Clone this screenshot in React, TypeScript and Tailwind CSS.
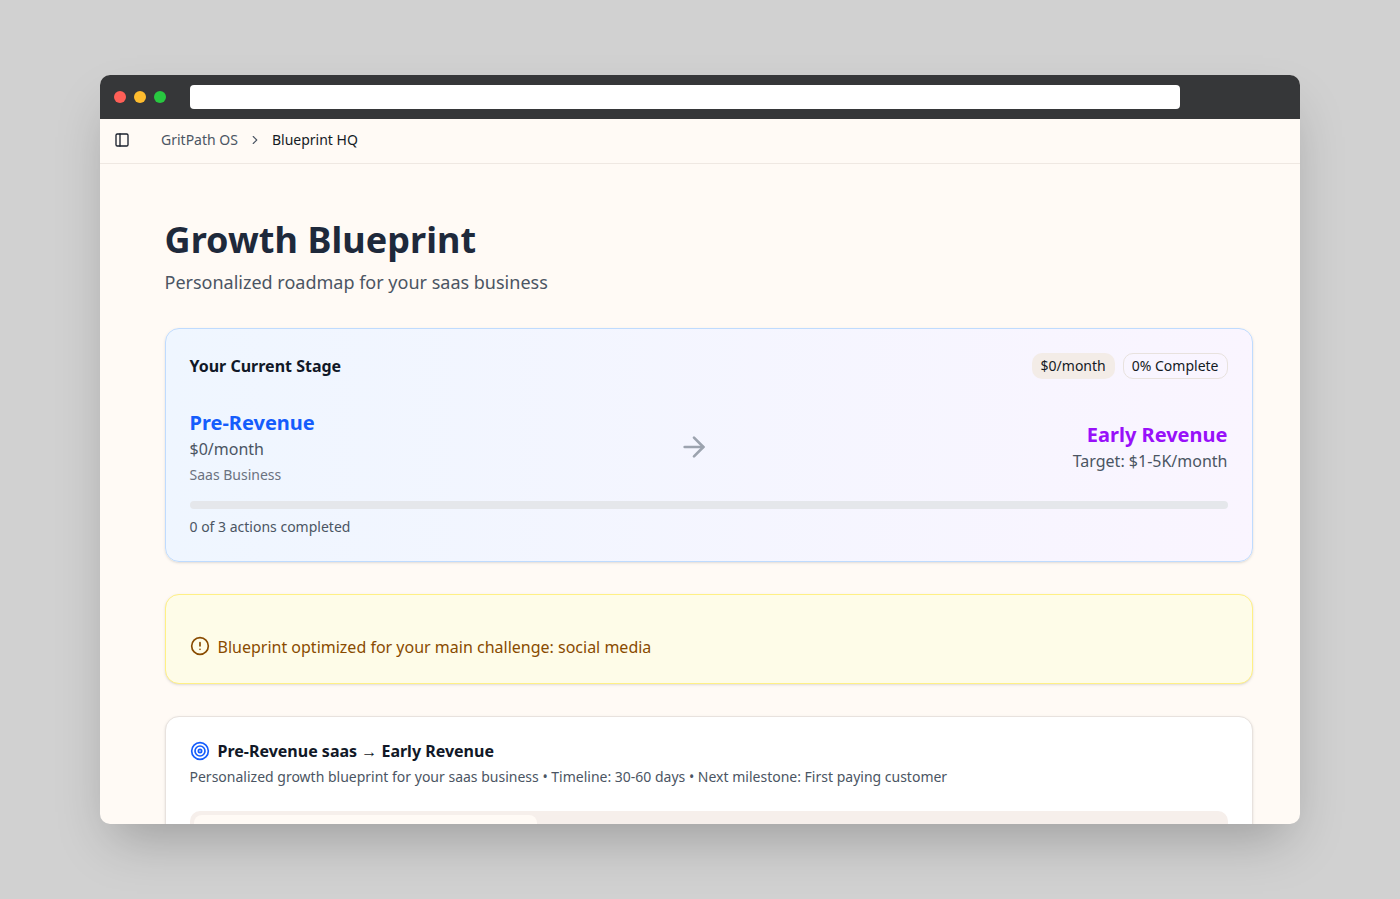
import React from "react";

export default function App() {
  return (
    <div className="w-[1400px] h-[899px] bg-[#d1d1d1] pt-[75px] pl-[100px] overflow-hidden antialiased font-['Noto_Sans',sans-serif]">
      <div className="w-[1200px] h-[749px] rounded-[10px] overflow-hidden bg-[#fffaf5] shadow-2xl flex flex-col">
        <div className="h-[44px] shrink-0 bg-[#363739] flex items-center pl-[14px]">
          <div className="flex gap-2">
            <span className="w-3 h-3 rounded-full bg-[#ff5f57]" />
            <span className="w-3 h-3 rounded-full bg-[#febc2e]" />
            <span className="w-3 h-3 rounded-full bg-[#28c840]" />
          </div>
          <div className="ml-[24px] w-[990px] h-6 rounded bg-white" />
        </div>
        <div className="h-[45px] shrink-0 border-b border-[#efe8e2] flex items-center pl-[14px] pb-[2px] text-sm">
          <svg width="16" height="16" viewBox="0 0 24 24" fill="none" stroke="#1a202c" strokeWidth="2" strokeLinecap="round" strokeLinejoin="round">
            <rect x="3" y="3" width="18" height="18" rx="2" />
            <path d="M9 3v18" />
          </svg>
          <span className="ml-[31px] text-[#4b5563]">GritPath OS</span>
          <svg className="ml-[10px]" width="14" height="14" viewBox="0 0 24 24" fill="none" stroke="#4b5563" strokeWidth="2" strokeLinecap="round" strokeLinejoin="round">
            <path d="m9 18 6-6-6-6" />
          </svg>
          <span className="ml-[10px] text-[#141a24]">Blueprint HQ</span>
        </div>
        <main className="flex-1 overflow-hidden pl-[64.5px] pr-[47.5px] pt-[48px]">
          <h1 className="text-4xl font-bold text-[#1e293b] leading-[56px] tracking-[0.07px]">Growth Blueprint</h1>
          <p className="text-lg text-[#4b5563] leading-7">Personalized roadmap for your saas business</p>

          <section className="mt-[32px] h-[234px] rounded-[14px] border border-[#bfdbfe] bg-gradient-to-r from-[#eff6ff] to-[#faf5ff] shadow-sm px-6 pt-6">
            <div className="flex items-center justify-between h-[26px]">
              <h2 className="font-bold text-base text-[#111827]">Your Current Stage</h2>
              <div className="flex gap-2 text-sm text-[#141a24]">
                <span className="h-[26px] px-[9px] rounded-[10px] bg-[#f3ece7] flex items-center">$0/month</span>
                <span className="h-[26px] px-[8px] rounded-[10px] border border-[#e8e2de] flex items-center">0% Complete</span>
              </div>
            </div>
            <div className="flex items-center justify-between mt-[24px] h-[87px]">
              <div>
                <div className="text-xl font-bold text-[#155dfc] leading-7">Pre-Revenue</div>
                <div className="text-base text-[#4b5563] leading-6">$0/month</div>
                <div className="text-sm text-[#6b7280] mt-1 leading-5">Saas Business</div>
              </div>
              <svg width="32" height="32" viewBox="0 0 24 24" fill="none" stroke="#9ca3af" strokeWidth="2" strokeLinecap="round" strokeLinejoin="round">
                <path d="M5 12h14" />
                <path d="m12 5 7 7-7 7" />
              </svg>
              <div className="text-right">
                <div className="text-xl font-bold text-[#9810fa] leading-7">Early Revenue</div>
                <div className="text-base text-[#4b5563] leading-6">Target: $1-5K/month</div>
              </div>
            </div>
            <div className="mt-[11px] h-2 rounded-full bg-[#e5e7eb]" />
            <div className="mt-2 text-sm text-[#4b5563] leading-5">0 of 3 actions completed</div>
          </section>

          <section className="mt-[32px] h-[90px] rounded-[14px] border border-[#fff085] bg-[#fefce8] shadow-sm pl-6 pt-[40px] flex items-start gap-2 text-base text-[#894b00]">
            <svg className="mt-[1px]" width="20" height="20" viewBox="0 0 24 24" fill="none" stroke="#894b00" strokeWidth="2" strokeLinecap="round" strokeLinejoin="round">
              <circle cx="12" cy="12" r="10" />
              <line x1="12" x2="12" y1="8" y2="12" />
              <line x1="12" x2="12.01" y1="16" y2="16" />
            </svg>
            <span className="leading-6">Blueprint optimized for your main challenge: social media</span>
          </section>

          <section className="mt-[32px] h-[200px] rounded-[14px] border border-[#e8e2de] bg-white shadow-sm px-6 pt-6">
            <div className="flex items-center gap-2 h-5 font-bold text-base text-[#111827]">
              <svg width="20" height="20" viewBox="0 0 24 24" fill="none" stroke="#155dfc" strokeWidth="2" strokeLinecap="round" strokeLinejoin="round">
                <circle cx="12" cy="12" r="10" />
                <circle cx="12" cy="12" r="6" />
                <circle cx="12" cy="12" r="2" />
              </svg>
              <span>Pre-Revenue saas → Early Revenue</span>
            </div>
            <p className="mt-[6px] text-sm text-[#4b5563] leading-5">Personalized growth blueprint for your saas business • Timeline: 30-60 days • Next milestone: First paying customer</p>
            <div className="mt-6 h-9 rounded-[10px] bg-[#f6efeb] p-1">
              <div className="w-[343px] h-7 rounded-lg bg-[#fffaf5]" />
            </div>
          </section>
        </main>
      </div>
    </div>
  );
}
